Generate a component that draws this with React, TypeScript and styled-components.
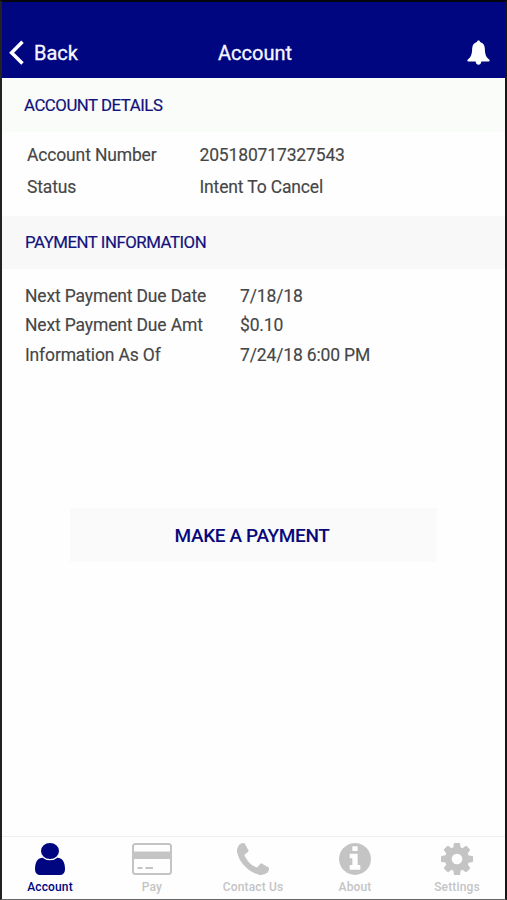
import React from "react";
import styled, { createGlobalStyle } from "styled-components";

const Global = createGlobalStyle`
  * { box-sizing: border-box; }
  body { margin: 0; background: #fff; font-family: Roboto, "Liberation Sans", sans-serif; }
`;

const Screen = styled.div`
  width: 507px;
  height: 900px;
  display: flex;
  flex-direction: column;
  background: #fefefe;
  border-style: solid;
  border-width: 2px 2px 1px 2px;
  border-color: #050510 #151515 #666 #222;
  overflow: hidden;
`;

const Header = styled.header`
  height: 76px;
  flex: none;
  display: grid;
  grid-template-columns: 209px auto 1fr;
  align-items: center;
  padding: 25px 15px 0 7px;
  background: #000680;
  color: #f6f6ff;
`;

const BackButton = styled.div`
  display: flex;
  align-items: center;
  gap: 9px;
`;

const HeaderText = styled.span`
  font-size: 20px;
  line-height: 24px;
  -webkit-text-stroke: 0.3px currentColor;
`;

const BellSlot = styled.div`
  display: flex;
  justify-content: flex-end;
`;

const SectionTitle = styled.h2<{ $height: number; $tint: string; $indent: number }>`
  height: ${(p) => p.$height}px;
  flex: none;
  margin: 0;
  padding: 0 0 1px ${(p) => p.$indent}px;
  display: flex;
  align-items: center;
  background: ${(p) => p.$tint};
  color: #12127c;
  font-size: 16.8px;
  font-weight: 400;
  letter-spacing: -0.46px;
  -webkit-text-stroke: 0.2px currentColor;
`;

const Details = styled.dl<{ $height: number; $pad: string; $label: number; $row: number }>`
  height: ${(p) => p.$height}px;
  flex: none;
  margin: 0;
  padding: ${(p) => p.$pad};
  display: grid;
  grid-template-columns: ${(p) => p.$label}px 1fr;
  grid-auto-rows: ${(p) => p.$row}px;
  align-content: start;
  align-items: center;
  color: #464646;
  font-size: 17.5px;
  letter-spacing: -0.15px;
  white-space: nowrap;
  -webkit-text-stroke: 0.15px currentColor;
`;

const Label = styled.dt``;

const Value = styled.dd`
  margin: 0;
`;

const PayButton = styled.button`
  width: 367px;
  height: 54px;
  flex: none;
  margin: 0 0 0 68px;
  padding: 0 3px 0 0;
  border: 0;
  background: #fafafa;
  color: #08087a;
  font-family: inherit;
  font-size: 19px;
  font-weight: 500;
  letter-spacing: -0.38px;
`;

const TabBar = styled.nav`
  height: 63px;
  flex: none;
  margin-top: auto;
  padding: 6px 0 0;
  display: grid;
  grid-template-columns: 96px 108px 94px 110px 94px;
  border-top: 1px solid #eeeeee;
`;

const Tab = styled.div<{ $active?: boolean }>`
  display: flex;
  flex-direction: column;
  align-items: center;
  color: ${(p) => (p.$active ? "#000680" : "#c4c4c4")};
`;

const TabLabel = styled.span`
  margin-top: 4px;
  font-size: 12px;
  line-height: 16px;
  font-weight: 500;
  letter-spacing: 0.15px;
  white-space: nowrap;
`;

const Glyph = ({ box, width = 32, d }: { box: string; width?: number; d: string }) => (
  <svg width={width} height="32" viewBox={box} preserveAspectRatio="none" fill="currentColor">
    <path d={d} />
  </svg>
);

const userPath =
  "M1536 1399q0 109-62.5 187t-150.5 78h-854q-88 0-150.5-78t-62.5-187q0-85 8.5-160.5t31.5-152 58.5-131 94-89 134.5-34.5q131 128 313 128t313-128q76 0 134.5 34.5t94 89 58.5 131 31.5 152 8.5 160.5zm-256-887q0 159-112.5 271.5t-271.5 112.5-271.5-112.5-112.5-271.5 112.5-271.5 271.5-112.5 271.5 112.5 112.5 271.5z";
const phonePath =
  "M1600 1240q0 27-10 70.5t-21 68.5q-21 50-122 106-94 51-186 51-27 0-52.5-3.5t-57.5-12.5-47.5-14.5-55.5-20.5-49-18q-98-35-175-83-128-79-264.5-215.5t-215.5-264.5q-48-77-83-175-3-9-18-49t-20.5-55.5-14.5-47.5-12.5-57.5-3.5-52.5q0-92 51-186 56-101 106-122 25-11 68.5-21t70.5-10q14 0 21 3 18 6 53 76 11 19 30 54t35 63.5 31 53.5q3 4 17.5 25t21.5 35.5 7 28.5q0 20-28.5 50t-62 55-62 53-28.5 46q0 9 5 22.5t8.5 20.5 14 24 11.5 19q76 137 174 235t235 174q2 1 19 11.5t24 14 20.5 8.5 22.5 5q18 0 46-28.5t53-62 55-62 50-28.5q14 0 28.5 7t35.5 21.5 25 17.5q25 15 53.5 31t63.5 35 54 30q70 35 76 53 3 7 3 21z";
const infoPath =
  "M1152 1376v-160q0-14-9-23t-23-9h-96v-512q0-14-9-23t-23-9h-320q-14 0-23 9t-9 23v160q0 14 9 23t23 9h96v320h-96q-14 0-23 9t-9 23v160q0 14 9 23t23 9h448q14 0 23-9t9-23zm-128-896v-160q0-14-9-23t-23-9h-192q-14 0-23 9t-9 23v160q0 14 9 23t23 9h192q14 0 23-9t9-23zm640 416q0 209-103 385.5t-279.5 279.5-385.5 103-385.5-103-279.5-279.5-103-385.5 103-385.5 279.5-279.5 385.5-103 385.5 103 279.5 279.5 103 385.5z";
const cogPath =
  "M1152 896q0-106-75-181t-181-75-181 75-75 181 75 181 181 75 181-75 75-181zm512-109v222q0 12-8 23t-20 13l-185 28q-19 54-39 91 35 50 107 138 10 12 10 25t-9 23q-27 37-99 108t-94 71q-12 0-26-9l-138-108q-44 23-91 38-16 136-29 186-7 28-36 28h-222q-14 0-24.5-8.5t-11.5-21.5l-28-184q-49-16-90-37l-141 107q-10 9-25 9-14 0-25-11-126-114-165-168-7-10-7-23 0-12 8-23 15-21 51-66.5t54-70.5q-27-50-41-99l-183-27q-13-2-21-12.5t-8-23.5v-222q0-12 8-23t19-13l186-28q14-46 39-92-40-57-107-138-10-12-10-24 0-10 9-23 26-36 98.5-107.5t94.5-71.5q13 0 26 10l138 107q44-23 91-38 16-136 29-186 7-28 36-28h222q14 0 24.5 8.5t11.5 21.5l28 184q49 16 90 37l142-107q9-9 24-9 13 0 25 10 129 119 165 170 7 8 7 22 0 12-8 23-15 21-51 66.5t-54 70.5q26 50 41 98l183 28q13 2 21 12.5t8 23.5z";

const CardIcon = () => (
  <svg width="40" height="32" viewBox="0 0 40 32" fill="none">
    <rect x="1" y="1" width="38" height="30" rx="2.5" stroke="currentColor" strokeWidth="2" />
    <path d="M1 8.5H39V16H1Z" fill="currentColor" />
    <path d="M5.5 25h5M13.5 25h7.5" stroke="currentColor" strokeWidth="2" />
  </svg>
);

const BellIcon = () => (
  <svg width="23" height="26" viewBox="0 0 24 26" preserveAspectRatio="none" fill="#fff">
    <path d="M12 .5c1 0 1.6.7 1.7 1.6 3.1.8 4.8 3.2 4.9 6.5.2 6.1 1.3 8.9 4.8 11.2.5.9.2 1.7-.7 1.7H15c-.3 2-1.3 3.3-3 3.3s-2.7-1.3-3-3.3H1.3c-.9 0-1.2-.8-.7-1.7 3.5-2.3 4.6-5.1 4.8-11.2.1-3.3 1.8-5.7 4.9-6.5.1-.9.7-1.6 1.7-1.6Z" />
  </svg>
);

const ChevronIcon = () => (
  <svg width="16" height="26" viewBox="0 0 16 26" fill="none" stroke="#fff" strokeWidth="3.5">
    <path d="M13.5 1.8L2.6 12.7L13.5 23.6" />
  </svg>
);

export default function App() {
  return (
    <>
      <Global />
      <Screen>
        <Header>
          <BackButton>
            <ChevronIcon />
            <HeaderText>Back</HeaderText>
          </BackButton>
          <HeaderText>Account</HeaderText>
          <BellSlot>
            <BellIcon />
          </BellSlot>
        </Header>
        <SectionTitle $height={54} $tint="#fafcf9" $indent={22}>ACCOUNT DETAILS</SectionTitle>
        <Details $height={84} $pad="7px 0 0 25px" $label={172.5} $row={32}>
          <Label>Account Number</Label>
          <Value>205180717327543</Value>
          <Label>Status</Label>
          <Value>Intent To Cancel</Value>
        </Details>
        <SectionTitle $height={53} $tint="#f8f8f8" $indent={23}>PAYMENT INFORMATION</SectionTitle>
        <Details $height={239} $pad="12px 0 0 23px" $label={215} $row={29.5}>
          <Label>Next Payment Due Date</Label>
          <Value>7/18/18</Value>
          <Label>Next Payment Due Amt</Label>
          <Value>$0.10</Value>
          <Label>Information As Of</Label>
          <Value>7/24/18 6:00 PM</Value>
        </Details>
        <PayButton>MAKE A PAYMENT</PayButton>
        <TabBar>
          <Tab $active>
            <Glyph box="256 128 1280 1536" width={30} d={userPath} />
            <TabLabel>Account</TabLabel>
          </Tab>
          <Tab>
            <CardIcon />
            <TabLabel>Pay</TabLabel>
          </Tab>
          <Tab>
            <Glyph box="192 128 1408 1408" d={phonePath} />
            <TabLabel>Contact Us</TabLabel>
          </Tab>
          <Tab>
            <Glyph box="128 128 1536 1536" d={infoPath} />
            <TabLabel>About</TabLabel>
          </Tab>
          <Tab>
            <Glyph box="128 128 1536 1536" d={cogPath} />
            <TabLabel>Settings</TabLabel>
          </Tab>
        </TabBar>
      </Screen>
    </>
  );
}
